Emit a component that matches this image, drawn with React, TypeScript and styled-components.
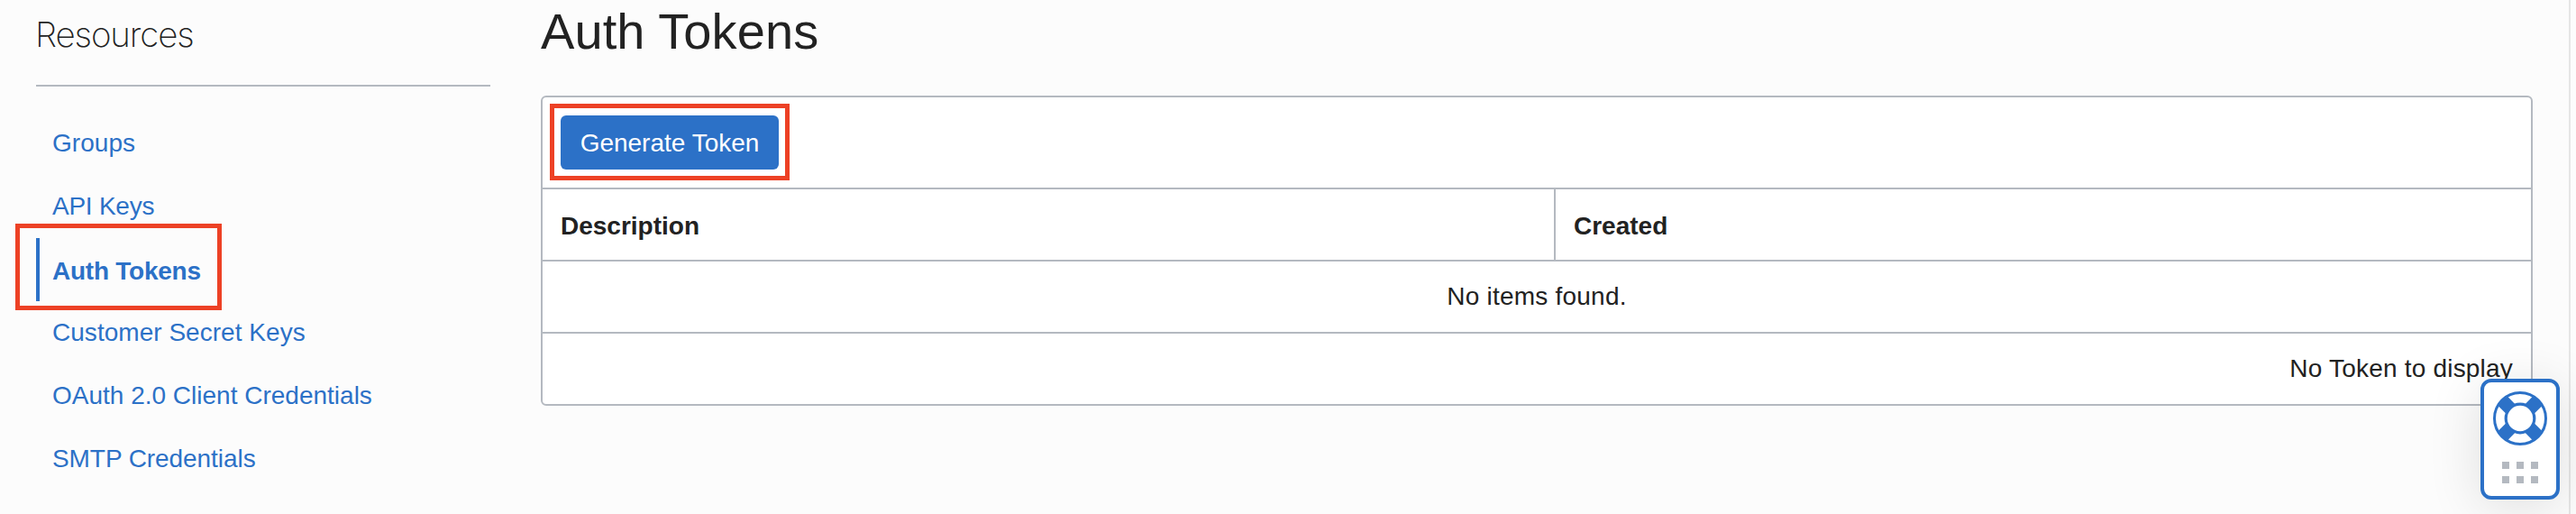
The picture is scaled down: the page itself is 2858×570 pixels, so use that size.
import React from "react";
import styled, { createGlobalStyle } from "styled-components";

const blue = "#2c71c7";
const line = "#b4b9c0";
const ink = "#222222";
const red = "#ed4125";

const GlobalStyle = createGlobalStyle`
  *, *::before, *::after { box-sizing: border-box; }
  body {
    margin: 0;
    background: #fcfcfc;
    color: ${ink};
    font-family: "Liberation Sans", Arial, sans-serif;
    font-size: 28px;
    overflow: hidden;
  }
`;

const Page = styled.div`
  position: relative;
  display: flex;
  width: 2858px;
  height: 570px;
  padding-left: 40px;
  overflow: hidden;
`;

const Sidebar = styled.aside`
  flex: none;
  width: 504px;
  margin-right: 56px;
`;

const SidebarTitle = styled.h2`
  height: 96px;
  margin: 0 0 28px;
  padding-top: 14px;
  border-bottom: 2px solid ${line};
  font-family: Inter, sans-serif;
  font-size: 38.5px;
  font-weight: 200;
  line-height: 48px;
  letter-spacing: -1.1px;
  text-indent: -1px;
`;

const NavList = styled.ul`
  margin: 0;
  padding: 0;
  list-style: none;
`;

const NavItem = styled.li<{ $active?: boolean }>`
  position: relative;
  height: 70px;
  padding: ${(p) => (p.$active ? "21px 0 0 14px" : "19px 0 0 18px")};
  border-left: ${(p) => (p.$active ? `4px solid ${blue}` : "none")};
  font-weight: ${(p) => (p.$active ? 700 : 400)};
`;

const NavLink = styled.a<{ $spacing?: number }>`
  display: block;
  line-height: 32px;
  color: ${blue};
  text-decoration: none;
  white-space: nowrap;
  letter-spacing: ${(p) => p.$spacing ?? 0}px;
`;

const NavHighlight = styled.span`
  position: absolute;
  left: -27px;
  top: -16px;
  width: 229px;
  height: 96px;
  border: 5px solid ${red};
`;

const Main = styled.main`
  flex: none;
  width: 2210px;
  margin-right: 40px;
`;

const Title = styled.h1`
  height: 106px;
  margin: 0;
  padding-top: 3px;
  font-size: 56px;
  font-weight: 400;
  line-height: 64px;
  letter-spacing: 0.1px;
`;

const Panel = styled.section`
  border: 2px solid ${line};
  border-radius: 6px;
  background: #ffffff;
`;

const Toolbar = styled.div`
  height: 102px;
  padding: 20px;
  border-bottom: 2px solid ${line};
`;

const ButtonWrap = styled.div`
  position: relative;
  width: 242px;
`;

const Button = styled.button`
  display: block;
  width: 242px;
  height: 60px;
  padding: 1px 0 0;
  border: 0;
  border-radius: 6px;
  background: ${blue};
  color: #ffffff;
  font: inherit;
  white-space: nowrap;
`;

const ButtonHighlight = styled.span`
  position: absolute;
  left: -12px;
  top: -13px;
  width: 266px;
  height: 85px;
  border: 5px solid ${red};
`;

const HeaderRow = styled.div`
  display: grid;
  grid-template-columns: 1122px 1fr;
  height: 80px;
  border-bottom: 2px solid ${line};
`;

const HeaderCell = styled.div`
  padding: 25px 20px 0;
  font-weight: 700;
  line-height: 32px;

  & + & {
    border-left: 2px solid ${line};
  }
`;

const EmptyRow = styled.div`
  height: 80px;
  padding-top: 23px;
  border-bottom: 2px solid ${line};
  line-height: 32px;
  letter-spacing: 0.22px;
  text-align: center;
`;

const FooterRow = styled.div`
  height: 78px;
  padding: 23px 20px 0 0;
  line-height: 32px;
  letter-spacing: 0.2px;
  text-align: right;
`;

const Edge = styled.div`
  width: 8px;
  border-left: 2px solid #e6e6e6;
`;

const HelpWidget = styled.div`
  position: absolute;
  left: 2752px;
  top: 420px;
  display: flex;
  flex-direction: column;
  align-items: center;
  width: 88px;
  height: 134px;
  padding-top: 10px;
  border: 4px solid ${blue};
  border-radius: 12px;
  background: #ffffff;
  box-shadow: 0 8px 60px rgba(0, 0, 0, 0.12);
`;

const DotGrid = styled.div`
  display: grid;
  grid-template-columns: repeat(3, 8px);
  gap: 8px;
  margin-top: 18px;
`;

const Dot = styled.span`
  height: 8px;
  background: #b4b9c0;
`;

const LifeRing = () => (
  <svg width="60" height="60" viewBox="-30 -30 60 60">
    <circle r="28.5" fill="none" stroke={blue} strokeWidth="3" />
    <circle r="15.8" fill="none" stroke={blue} strokeWidth="3.2" />
    {[45, 135, 225, 315].map((angle) => (
      <path
        key={angle}
        transform={`rotate(${angle})`}
        d="M14.4 -7.3H27.6A28.5 28.5 0 0 1 27.6 7.3H14.4A16.1 16.1 0 0 0 14.4 -7.3Z"
        fill={blue}
      />
    ))}
  </svg>
);

const links = [
  { label: "Groups", spacing: 0.05 },
  { label: "API Keys", spacing: -0.25 },
  { label: "Auth Tokens", spacing: -0.25, active: true },
  { label: "Customer Secret Keys", spacing: 0.03 },
  { label: "OAuth 2.0 Client Credentials", spacing: 0 },
  { label: "SMTP Credentials", spacing: -0.07 },
];

export default function App() {
  return (
    <>
      <GlobalStyle />
      <Page>
        <Sidebar>
          <SidebarTitle>Resources</SidebarTitle>
          <NavList>
            {links.map((item) => (
              <NavItem key={item.label} $active={item.active}>
                <NavLink $spacing={item.spacing}>{item.label}</NavLink>
                {item.active && <NavHighlight />}
              </NavItem>
            ))}
          </NavList>
        </Sidebar>
        <Main>
          <Title>Auth Tokens</Title>
          <Panel>
            <Toolbar>
              <ButtonWrap>
                <Button>Generate Token</Button>
                <ButtonHighlight />
              </ButtonWrap>
            </Toolbar>
            <HeaderRow>
              <HeaderCell>Description</HeaderCell>
              <HeaderCell>Created</HeaderCell>
            </HeaderRow>
            <EmptyRow>No items found.</EmptyRow>
            <FooterRow>No Token to display</FooterRow>
          </Panel>
        </Main>
        <Edge />
        <HelpWidget>
          <LifeRing />
          <DotGrid>
            {Array.from({ length: 6 }, (_, i) => (
              <Dot key={i} />
            ))}
          </DotGrid>
        </HelpWidget>
      </Page>
    </>
  );
}
